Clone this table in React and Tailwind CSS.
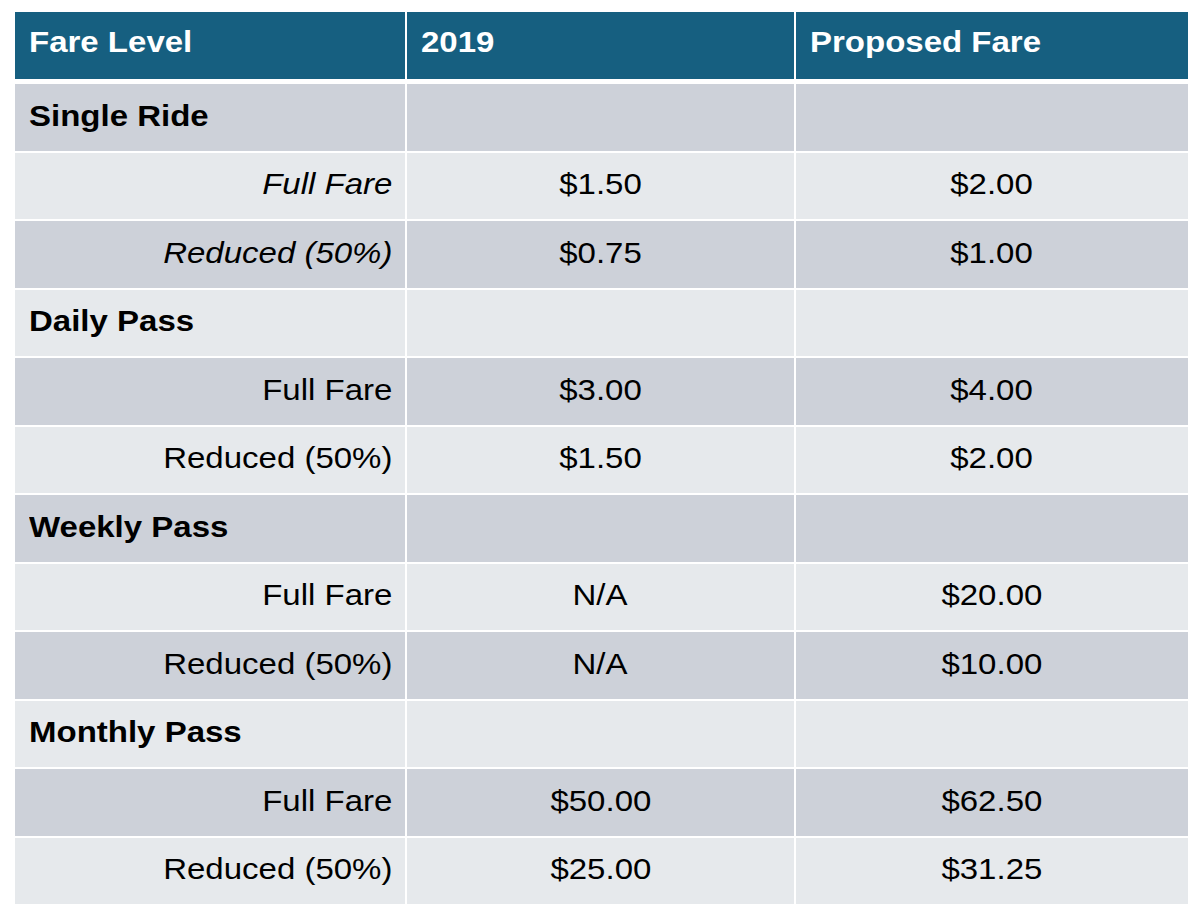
import React from "react";

const rows = [
  { type: "group", label: "Single Ride" },
  { type: "item", label: "Full Fare", a: "$1.50", b: "$2.00", italic: true },
  { type: "item", label: "Reduced (50%)", a: "$0.75", b: "$1.00", italic: true },
  { type: "group", label: "Daily Pass" },
  { type: "item", label: "Full Fare", a: "$3.00", b: "$4.00" },
  { type: "item", label: "Reduced (50%)", a: "$1.50", b: "$2.00" },
  { type: "group", label: "Weekly Pass" },
  { type: "item", label: "Full Fare", a: "N/A", b: "$20.00" },
  { type: "item", label: "Reduced (50%)", a: "N/A", b: "$10.00" },
  { type: "group", label: "Monthly Pass" },
  { type: "item", label: "Full Fare", a: "$50.00", b: "$62.50" },
  { type: "item", label: "Reduced (50%)", a: "$25.00", b: "$31.25" },
];

export default function App() {
  return (
    <div
      className="w-[1200px] h-[924px] bg-white pt-[12px] pl-[15px] text-black"
      style={{ fontFamily: '"Liberation Sans", Arial, sans-serif' }}
    >
      <div className="w-[1173px] flex flex-col">
        <div className="grid grid-cols-[390px_387px_392px] gap-x-[2px] h-[67px] mb-[5px]">
          <div className="bg-[#165f80] text-white font-bold text-[30px] pl-[14px] pt-[10px] leading-[40px]">
            <span className="inline-block scale-x-110 origin-left">Fare Level</span>
          </div>
          <div className="bg-[#165f80] text-white font-bold text-[30px] pl-[14px] pt-[10px] leading-[40px]">
            <span className="inline-block scale-x-110 origin-left">2019</span>
          </div>
          <div className="bg-[#165f80] text-white font-bold text-[30px] pl-[14px] pt-[10px] leading-[40px]">
            <span className="inline-block scale-x-110 origin-left">Proposed Fare</span>
          </div>
        </div>
        <div className="flex flex-col gap-y-[2px]">
          {rows.map((r, i) => {
            const bg = i % 2 === 0 ? "bg-[#cdd1d9]" : "bg-[#e6e9ec]";
            return (
              <div key={i} className="grid grid-cols-[390px_387px_392px] gap-x-[2px] h-[66.5px]">
                {r.type === "group" ? (
                  <>
                    <div className={`${bg} font-bold text-[30px] pl-[14px] flex items-center pb-[4px]`}>
                      <span className="inline-block scale-x-110 origin-left">{r.label}</span>
                    </div>
                    <div className={bg}></div>
                    <div className={bg}></div>
                  </>
                ) : (
                  <>
                    <div className={`${bg} text-[30px] pr-[13px] flex items-center justify-end pb-[4px] ${r.italic ? "italic" : ""}`}>
                      <span className="inline-block scale-x-110 origin-right">{r.label}</span>
                    </div>
                    <div className={`${bg} text-[30px] flex items-center justify-center pb-[4px]`}>
                      <span className="inline-block scale-x-110 origin-center">{r.a}</span>
                    </div>
                    <div className={`${bg} text-[30px] flex items-center justify-center pb-[4px]`}>
                      <span className="inline-block scale-x-110 origin-center">{r.b}</span>
                    </div>
                  </>
                )}
              </div>
            );
          })}
        </div>
      </div>
    </div>
  );
}
